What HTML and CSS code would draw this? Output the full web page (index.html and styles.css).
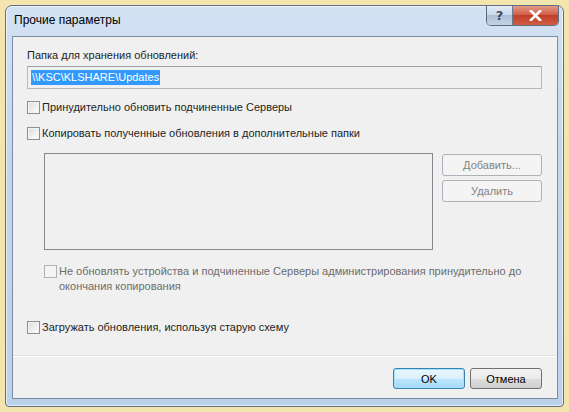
FILE: index.html
```html
<!DOCTYPE html>
<html lang="ru">
<head>
  <meta charset="UTF-8">
  <title>Прочие параметры</title>
  <link rel="stylesheet" href="styles.css">
</head>
<body>
  <div class="window">
    <div class="titlebar">
      <span class="title">Прочие параметры</span>
      <div class="caption-buttons">
        <span class="cap-btn help">?</span>
        <span class="cap-btn close">
          <svg width="13" height="11" viewBox="0 0 13 11">
            <path d="M2 1 L11 10 M11 1 L2 10" stroke="#fff" stroke-width="2.6" stroke-linecap="square"/>
          </svg>
        </span>
      </div>
    </div>

    <div class="client">
      <div class="field-label">Папка для хранения обновлений:</div>
      <div class="textbox"><span class="selected">\\KSC\KLSHARE\Updates</span></div>

      <label class="check-row first">
        <span class="checkbox"></span>
        Принудительно обновить подчиненные Серверы
      </label>
      <label class="check-row">
        <span class="checkbox"></span>
        Копировать полученные обновления в дополнительные папки
      </label>

      <div class="folders">
        <div class="listbox"></div>
        <div class="side-buttons">
          <button class="btn" disabled>Добавить...</button>
          <button class="btn" disabled>Удалить</button>
        </div>
      </div>

      <label class="check-row disabled">
        <span class="checkbox"></span>
        <span class="wrap-text">Не обновлять устройства и подчиненные Серверы администрирования принудительно до окончания копирования</span>
      </label>

      <label class="check-row old-scheme">
        <span class="checkbox"></span>
        Загружать обновления, используя старую схему
      </label>

      <div class="separator"></div>

      <div class="footer">
        <button class="btn default">OK</button>
        <button class="btn">Отмена</button>
      </div>
    </div>
  </div>
</body>
</html>
```

FILE: styles.css
```css
body {
  margin: 0;
  padding: 0;
  width: 569px;
  height: 412px;
  background: #f4e4ad;
  font-family: "Liberation Sans", Arial, sans-serif;
  font-size: 11px;
  color: #000;
  overflow: hidden;
}

.window {
  box-sizing: border-box;
  margin: 5px 0 0 5px;
  width: 559px;
  height: 402px;
  border: 1px solid #5f6f82;
  border-radius: 7px 7px 4px 4px;
  background: linear-gradient(to bottom, #d3e2f3 0%, #c2d6ee 40%, #bcd2ec 100%);
  box-shadow: inset 0 0 0 1px rgba(255,255,255,0.6);
  display: flex;
  flex-direction: column;
}

.titlebar {
  height: 30px;
  display: flex;
  justify-content: space-between;
  align-items: flex-start;
  padding: 0 4px 0 8px;
}

.title {
  margin-top: 7px;
  font-size: 12px;
  color: #000;
}

.caption-buttons {
  display: flex;
  height: 19px;
  border: 1px solid #5d6d80;
  border-top: none;
  border-radius: 0 0 5px 5px;
  overflow: hidden;
}

.cap-btn {
  display: flex;
  align-items: center;
  justify-content: center;
}

.help {
  width: 25px;
  background: linear-gradient(to bottom, #e3ecf6 0%, #cbd9e9 45%, #aebfd5 50%, #c3d3e6 100%);
  border-right: 1px solid #6b7b8e;
  color: #3c4b5e;
  font-family: "DejaVu Sans", sans-serif;
  font-size: 13px;
  font-weight: bold;
}

.close {
  width: 45px;
  background: linear-gradient(to bottom, #e29a88 0%, #d0604a 45%, #bf3f27 50%, #cf5f45 100%);
}

.client {
  flex: 1;
  margin: 0 5px 7px 6px;
  border: 1px solid #7c8da3;
  background: #f0f0f0;
  padding: 11px 15px 0 14px;
}

.field-label {
  line-height: 15px;
  color: #1e1e1e;
}

.textbox {
  box-sizing: border-box;
  margin-top: 3px;
  height: 23px;
  border: 1px solid #b4b8bf;
  border-top-color: #9ea3aa;
  background: #f0f0f0;
  padding: 3px 0 0 3px;
}

.selected {
  display: inline-block;
  background: #3399ff;
  color: #fff;
  line-height: 15px;
  padding: 0 1px;
}

.check-row {
  display: flex;
  align-items: center;
  gap: 1px;
  line-height: 15px;
  margin-top: 11px;
  color: #1e1e1e;
}

.checkbox {
  flex: none;
  width: 11px;
  height: 11px;
  border: 1px solid #8e8f8f;
  background: linear-gradient(135deg, #dcdcdc 0%, #f4f4f4 70%, #fff 100%);
  box-shadow: inset 0 0 0 1px #f4f4f4;
  margin-right: 1px;
}

.folders {
  display: flex;
  margin: 12px 0 0 17px;
}

.listbox {
  width: 387px;
  height: 95px;
  border: 1px solid #828790;
  background: #f0f0f0;
}

.side-buttons {
  display: flex;
  flex-direction: column;
  gap: 4px;
  margin-left: 9px;
  margin-top: 1px;
}

.btn {
  box-sizing: border-box;
  width: 100px;
  height: 22px;
  font-family: inherit;
  font-size: 11px;
  border: 1px solid #707070;
  border-radius: 3px;
  background: linear-gradient(to bottom, #f2f2f2 0%, #ebebeb 50%, #dddddd 51%, #cfcfcf 100%);
  color: #000;
  padding: 0;
}

.btn:disabled {
  border-color: #adb2b5;
  background: #f4f4f4;
  color: #838383;
}

.check-row.disabled {
  align-items: flex-start;
  margin: 14px 0 0 17px;
  color: #6d6d6d;
}

.wrap-text {
  width: 470px;
}

.check-row.disabled .checkbox {
  border-color: #b1b1b1;
  background: #f4f4f4;
  margin-top: 1px;
}

.check-row.old-scheme {
  margin-top: 26px;
}

.separator {
  margin: 20px -15px 0 -14px;
  border-top: 1px solid #dfdfdf;
  border-bottom: 1px solid #fff;
}

.footer {
  display: flex;
  justify-content: flex-end;
  gap: 5px;
  margin-top: 11px;
}

.footer .btn {
  width: 72px;
  height: 21px;
}

.btn.default {
  border-color: #3c7fb1;
  background: linear-gradient(to bottom, #eaf6fd 0%, #d9f0fc 50%, #bee6fd 51%, #a7d9f5 100%);
  box-shadow: inset 0 0 0 1px #9ee3fc;
}
```
